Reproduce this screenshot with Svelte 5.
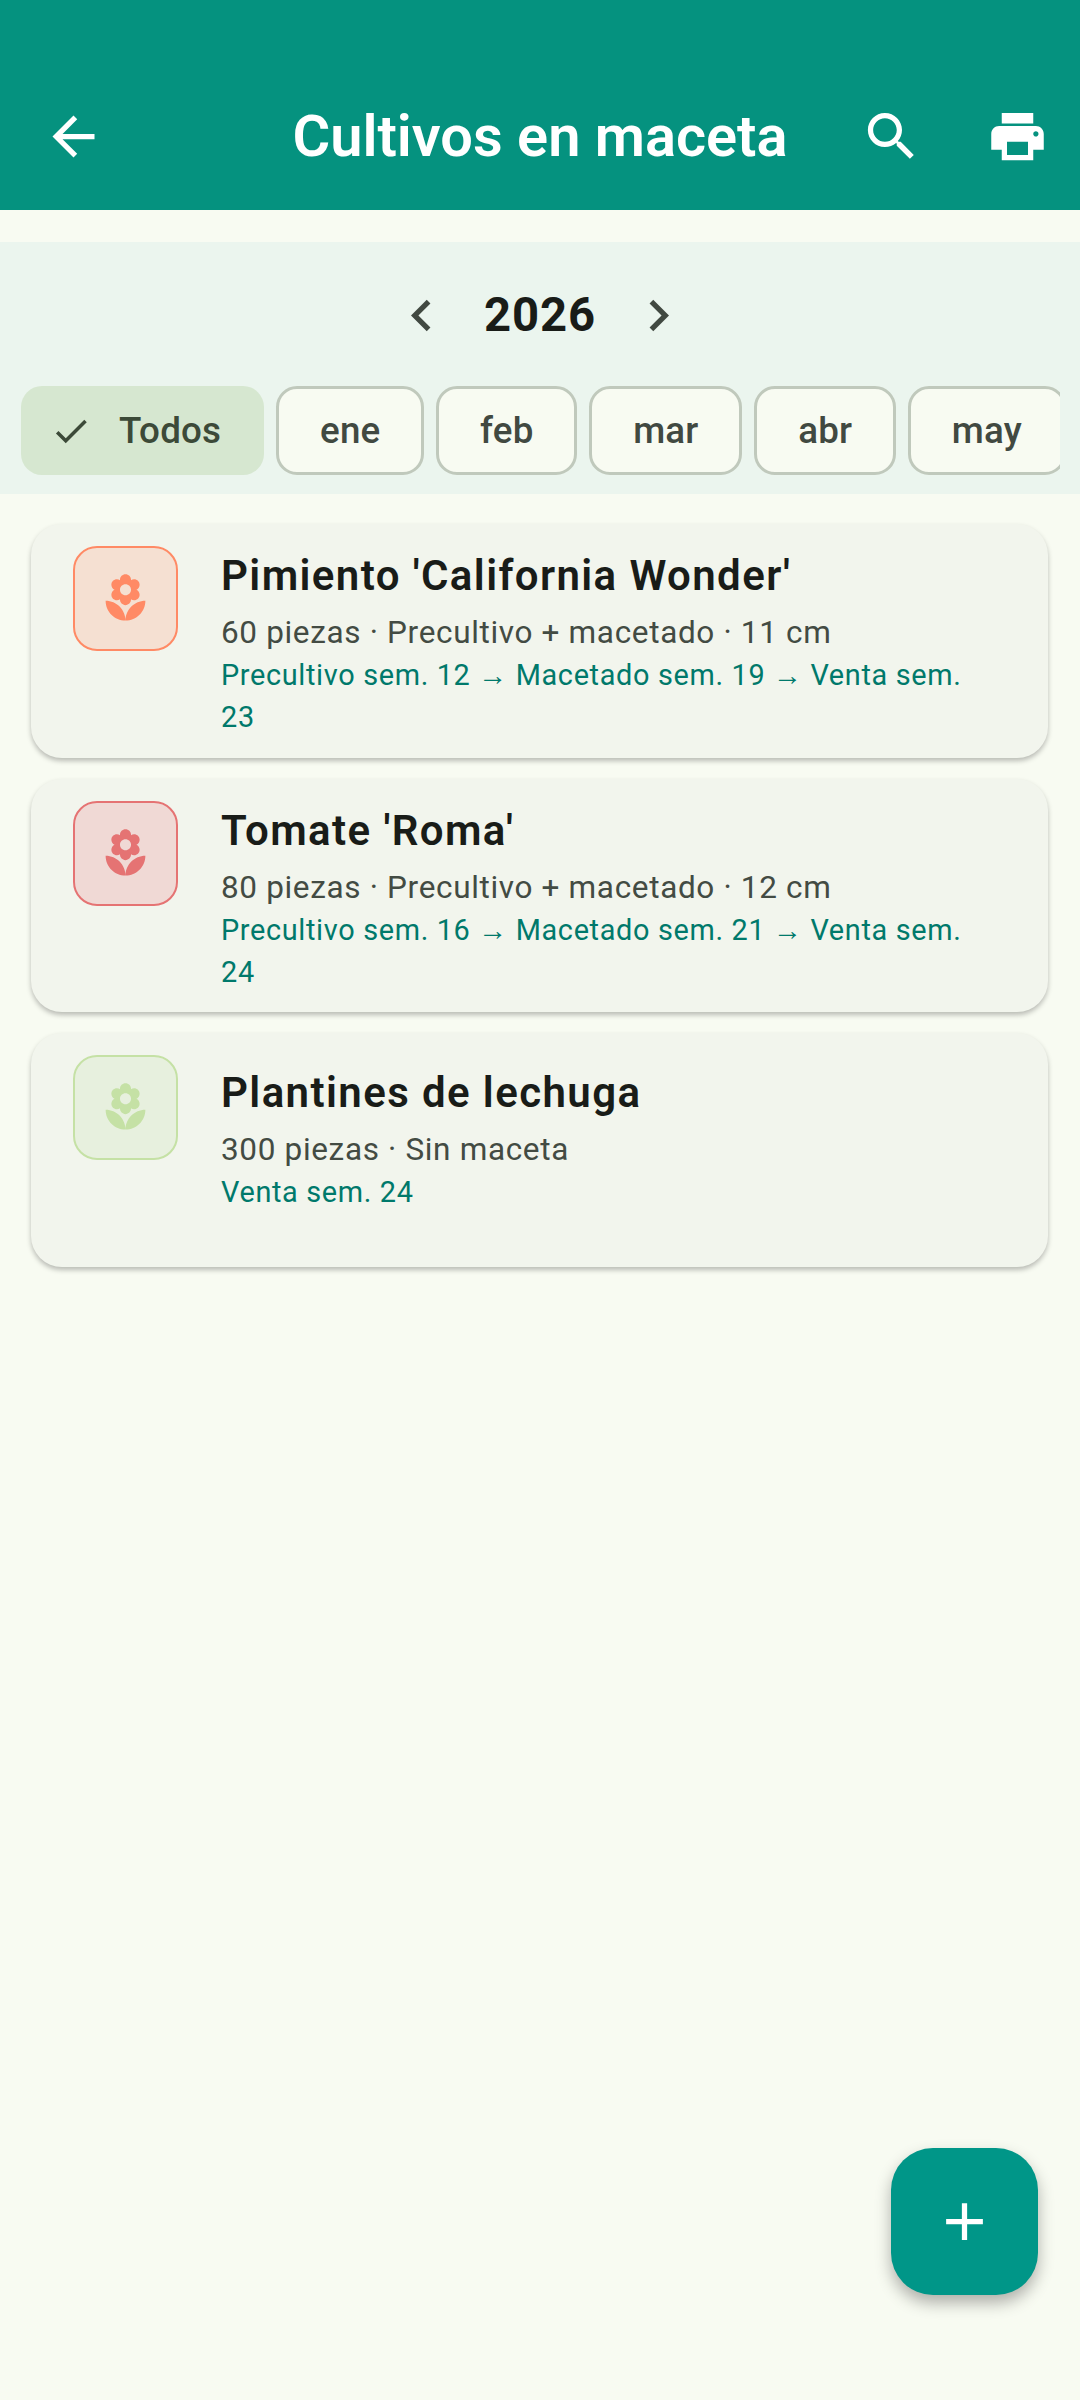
<script>
    const months = ['ene', 'feb', 'mar', 'abr', 'may'];
    const crops = [
        {
            name: "Pimiento 'California Wonder'",
            detail: '60 piezas · Precultivo + macetado · 11 cm',
            plan: 'Precultivo sem. 12 → Macetado sem. 19 → Venta sem. 23',
            color: '#ff8a65',
            tint: '#f5e0d2'
        },
        {
            name: "Tomate 'Roma'",
            detail: '80 piezas · Precultivo + macetado · 12 cm',
            plan: 'Precultivo sem. 16 → Macetado sem. 21 → Venta sem. 24',
            color: '#e57373',
            tint: '#f0d9d5'
        },
        {
            name: 'Plantines de lechuga',
            detail: '300 piezas · Sin maceta',
            plan: 'Venta sem. 24',
            color: '#c5e1a5',
            tint: '#e7f0de',
            short: true
        }
    ];
</script>

<div class="page">
    <header class="appbar">
        <div class="lead">
            <svg class="icon" viewBox="0 0 24 24"><path d="M20 11H7.83l5.59-5.59L12 4l-8 8 8 8 1.41-1.41L7.83 13H20v-2z" /></svg>
        </div>
        <h1>Cultivos en maceta</h1>
        <div class="actions">
            <button aria-label="Buscar">
                <svg class="icon" viewBox="0 0 24 24"><path d="M15.5 14h-.79l-.28-.27C15.41 12.59 16 11.11 16 9.5 16 5.91 13.09 3 9.5 3S3 5.91 3 9.5 5.91 16 9.5 16c1.61 0 3.09-.59 4.23-1.57l.27.28v.79l5 4.99L20.49 19l-4.99-5zm-6 0C7.01 14 5 11.99 5 9.5S7.01 5 9.5 5 14 7.01 14 9.5 11.99 14 9.5 14z" /></svg>
            </button>
            <button aria-label="Imprimir">
                <svg class="icon" viewBox="0 0 24 24"><path d="M19 8H5c-1.66 0-3 1.34-3 3v6h4v4h12v-4h4v-6c0-1.66-1.34-3-3-3zm-3 11H8v-5h8v5zm3-7c-.55 0-1-.45-1-1s.45-1 1-1 1 .45 1 1-.45 1-1 1zm-1-9H6v4h12V3z" /></svg>
            </button>
        </div>
    </header>

    <section class="filters">
        <div class="year">
            <button aria-label="Año anterior">
                <svg class="icon" viewBox="0 0 24 24"><path d="M15.41 7.41L14 6l-6 6 6 6 1.41-1.41L10.83 12z" /></svg>
            </button>
            <span>2026</span>
            <button aria-label="Año siguiente">
                <svg class="icon" viewBox="0 0 24 24"><path d="M10 6L8.59 7.41 13.17 12l-4.58 4.59L10 18l6-6z" /></svg>
            </button>
        </div>
        <div class="chips">
            <div class="chip selected">
                <svg viewBox="0 0 24 24"><path d="M9 16.17L4.83 12l-1.42 1.41L9 19 21 7l-1.41-1.41z" /></svg>
                Todos
            </div>
            {#each months as month}
                <div class="chip">{month}</div>
            {/each}
        </div>
    </section>

    <main class="list">
        {#each crops as crop}
            <article class="card" class:short={crop.short}>
                <div class="badge" style="background: {crop.tint}; border-color: {crop.color}; color: {crop.color};">
                    <svg viewBox="0 0 24 24"><path d="M12 22c4.97 0 9-4.03 9-9-4.97 0-9 4.03-9 9zM5.6 10.25c0 1.38 1.12 2.5 2.5 2.5.53 0 1.01-.16 1.42-.44l-.02.19c0 1.38 1.12 2.5 2.5 2.5s2.5-1.12 2.5-2.5l-.02-.19c.4.28.89.44 1.42.44 1.38 0 2.5-1.12 2.5-2.5 0-1-.59-1.85-1.43-2.25.84-.4 1.43-1.25 1.43-2.25 0-1.38-1.12-2.5-2.5-2.5-.53 0-1.01.16-1.42.44l.02-.19C14.5 2.12 13.38 1 12 1S9.5 2.12 9.5 3.5l.02.19c-.4-.28-.89-.44-1.42-.44-1.38 0-2.5 1.12-2.5 2.5 0 1 .59 1.85 1.43 2.25-.84.4-1.43 1.25-1.43 2.25zM12 5.5c1.38 0 2.5 1.12 2.5 2.5s-1.12 2.5-2.5 2.5S9.5 9.38 9.5 8s1.12-2.5 2.5-2.5zM3 13c0 4.97 4.03 9 9 9 0-4.97-4.03-9-9-9z" /></svg>
                </div>
                <div class="info">
                    <h2>{crop.name}</h2>
                    <p class="detail">{crop.detail}</p>
                    <p class="plan">{crop.plan}</p>
                </div>
            </article>
        {/each}
    </main>

    <button class="fab" aria-label="Añadir">
        <svg viewBox="0 0 24 24"><path d="M19 13h-6v6h-2v-6H5v-2h6V5h2v6h6v2z" /></svg>
    </button>
</div>

<style>
    :global(body) {
        margin: 0;
        background: #f8fbf2;
    }

    .page {
        position: relative;
        height: 2400px;
        overflow: hidden;
        background: #f8fbf2;
        font-family: Roboto, "Noto Sans", sans-serif;
    }

    button {
        display: flex;
        align-items: center;
        justify-content: center;
        padding: 0;
        border: none;
        background: none;
    }

    .icon {
        width: 63px;
        height: 63px;
        fill: currentColor;
    }

    .appbar {
        display: grid;
        grid-template-columns: 1fr auto 1fr;
        align-items: center;
        height: 147px;
        padding-top: 63px;
        background: #05927f;
        color: #fff;
    }

    .lead {
        display: flex;
        padding-left: 42px;
    }

    .appbar h1 {
        margin: 0;
        font-size: 57.75px;
        font-weight: 600;
        line-height: 1;
    }

    .actions {
        display: flex;
        justify-content: flex-end;
    }

    .actions button {
        width: 126px;
        height: 126px;
        color: #fff;
    }

    .filters {
        margin-top: 32px;
        padding: 10px 0 19px;
        background: #ebf5ee;
    }

    .year {
        display: flex;
        justify-content: center;
        align-items: center;
        color: #191c18;
        font-size: 47.25px;
        font-weight: 700;
        letter-spacing: 0.85px;
    }

    .year button {
        width: 126px;
        height: 126px;
        color: #414941;
    }

    .chips {
        display: flex;
        gap: 12px;
        margin: 8px 20px 0 21px;
        overflow: hidden;
    }

    .chip {
        display: flex;
        flex: none;
        align-items: center;
        box-sizing: border-box;
        height: 89px;
        padding: 0 40.8px;
        border: 3px solid #c0c9bc;
        border-radius: 21px;
        background: #f8fbf2;
        color: #414941;
        font-size: 36.75px;
        font-weight: 500;
        letter-spacing: 0.2px;
    }

    .chip.selected {
        gap: 27.5px;
        padding: 0 43px 0 28.5px;
        border: none;
        background: #d6e7d0;
        color: #3c4a38;
    }

    .chip svg {
        width: 42px;
        height: 42px;
        fill: currentColor;
    }

    .list {
        display: flex;
        flex-direction: column;
        gap: 21px;
        padding: 30px 32px 0 31px;
    }

    .card {
        display: flex;
        gap: 43px;
        box-sizing: border-box;
        min-height: 233.5px;
        padding: 22px 60px 0 42px;
        border-radius: 31px;
        background: #f2f5ed;
        box-shadow: 0 3px 5px rgba(0, 0, 0, 0.25);
    }

    .badge {
        display: flex;
        flex: none;
        align-items: center;
        justify-content: center;
        box-sizing: border-box;
        width: 105px;
        height: 105px;
        border: 2.6px solid;
        border-radius: 24px;
    }

    .badge svg {
        width: 53px;
        height: 53px;
        fill: currentColor;
    }

    .info {
        min-width: 0;
        flex: 1;
    }

    .card.short .info {
        padding-top: 7.5px;
    }

    .info h2 {
        margin: 0;
        color: #191c18;
        font-size: 42px;
        font-weight: 600;
        line-height: 60px;
        letter-spacing: 1.4px;
    }

    .detail {
        margin: 6px 0 0;
        color: #434b43;
        font-size: 31.5px;
        line-height: 42px;
        letter-spacing: 0.66px;
    }

    .plan {
        margin: 0;
        color: #00796b;
        font-size: 28.875px;
        line-height: 42px;
        letter-spacing: 0.66px;
    }

    .fab {
        position: absolute;
        right: 42px;
        bottom: 105px;
        width: 147px;
        height: 147px;
        border-radius: 42px;
        background: #009688;
        box-shadow: 0 8px 16px rgba(0, 0, 0, 0.3);
    }

    .fab svg {
        width: 63px;
        height: 63px;
        fill: #fff;
    }
</style>
